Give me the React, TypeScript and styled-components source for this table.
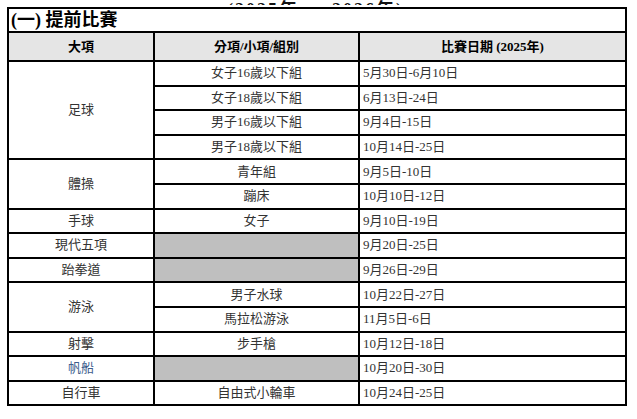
import React from "react";
import styled, { createGlobalStyle } from "styled-components";

const GlobalStyle = createGlobalStyle`
  html, body {
    margin: 0;
    padding: 0;
    background: #fff;
  }
  body {
    font-family: "Liberation Serif", "Noto Sans CJK TC", serif;
    color: #333;
  }
`;

const Page = styled.div`
  width: 637px;
  height: 419px;
  overflow: hidden;
  padding: 0 0 0 7px;
  box-sizing: border-box;
`;

// bottom sliver of the page heading, cut off by the top edge
const CutHeading = styled.div`
  width: 617px;
  height: 5px;
  overflow: hidden;
  display: flex;
  justify-content: center;
  align-items: flex-end;
  font-weight: bold;
  font-size: 18px;
  line-height: 18px;
  color: #111;
  margin-bottom: 2px;
`;

const CutHeadingText = styled.span`
  margin-bottom: -14px;
  letter-spacing: 2px;
`;

const Table = styled.table`
  border-collapse: collapse;
  table-layout: fixed;
  width: 618px;
`;

const TitleCell = styled.td`
  border: 2px solid #000;
  height: 22px;
  padding: 0 2px;
  font-weight: bold;
  font-size: 18px;
  line-height: 20px;
  color: #000;
  text-align: left;
  vertical-align: middle;
`;

const HeadCell = styled.th`
  border: 2px solid #000;
  height: 27px;
  padding: 0;
  background: #e5e5e5;
  font-weight: bold;
  font-size: 13px;
  line-height: 16px;
  color: #000;
  text-align: center;
  vertical-align: middle;
`;

const Cell = styled.td<{ $left?: boolean; $shade?: boolean; $tint?: string }>`
  border: 2px solid #000;
  height: 22.6px;
  padding: 0 ${(p) => (p.$left ? "3px" : "0")};
  background: ${(p) => (p.$shade ? "#bfbfbf" : "#fff")};
  font-size: 13px;
  line-height: 16px;
  color: ${(p) => p.$tint || "#333"};
  text-align: ${(p) => (p.$left ? "left" : "center")};
  vertical-align: middle;
  white-space: nowrap;
`;

type Sub = { name?: string; date: string };
type Sport = { name: string; tint?: string; subs: Sub[] };

const sports: Sport[] = [
  {
    name: "足球",
    subs: [
      { name: "女子16歲以下組", date: "5月30日-6月10日" },
      { name: "女子18歲以下組", date: "6月13日-24日" },
      { name: "男子16歲以下組", date: "9月4日-15日" },
      { name: "男子18歲以下組", date: "10月14日-25日" },
    ],
  },
  {
    name: "體操",
    subs: [
      { name: "青年組", date: "9月5日-10日" },
      { name: "蹦床", date: "10月10日-12日" },
    ],
  },
  { name: "手球", subs: [{ name: "女子", date: "9月10日-19日" }] },
  { name: "現代五項", subs: [{ date: "9月20日-25日" }] },
  { name: "跆拳道", subs: [{ date: "9月26日-29日" }] },
  {
    name: "游泳",
    subs: [
      { name: "男子水球", date: "10月22日-27日" },
      { name: "馬拉松游泳", date: "11月5日-6日" },
    ],
  },
  { name: "射擊", subs: [{ name: "步手槍", date: "10月12日-18日" }] },
  { name: "帆船", tint: "#3d5c8c", subs: [{ date: "10月20日-30日" }] },
  { name: "自行車", subs: [{ name: "自由式小輪車", date: "10月24日-25日" }] },
];

export default function App() {
  return (
    <>
      <GlobalStyle />
      <Page>
        <CutHeading>
          <CutHeadingText>(2025年 — 2026年)</CutHeadingText>
        </CutHeading>
        <Table>
          <colgroup>
            <col style={{ width: 146 }} />
            <col style={{ width: 205 }} />
            <col style={{ width: 267 }} />
          </colgroup>
          <tbody>
            <tr>
              <TitleCell colSpan={3}>(一) 提前比賽</TitleCell>
            </tr>
            <tr>
              <HeadCell>大項</HeadCell>
              <HeadCell>分項/小項/組別</HeadCell>
              <HeadCell>比賽日期 (2025年)</HeadCell>
            </tr>
            {sports.map((sport) =>
              sport.subs.map((sub, i) => (
                <tr key={sport.name + i}>
                  {i === 0 && (
                    <Cell rowSpan={sport.subs.length} $tint={sport.tint}>
                      {sport.name}
                    </Cell>
                  )}
                  <Cell $shade={!sub.name}>{sub.name}</Cell>
                  <Cell $left>{sub.date}</Cell>
                </tr>
              ))
            )}
          </tbody>
        </Table>
      </Page>
    </>
  );
}
